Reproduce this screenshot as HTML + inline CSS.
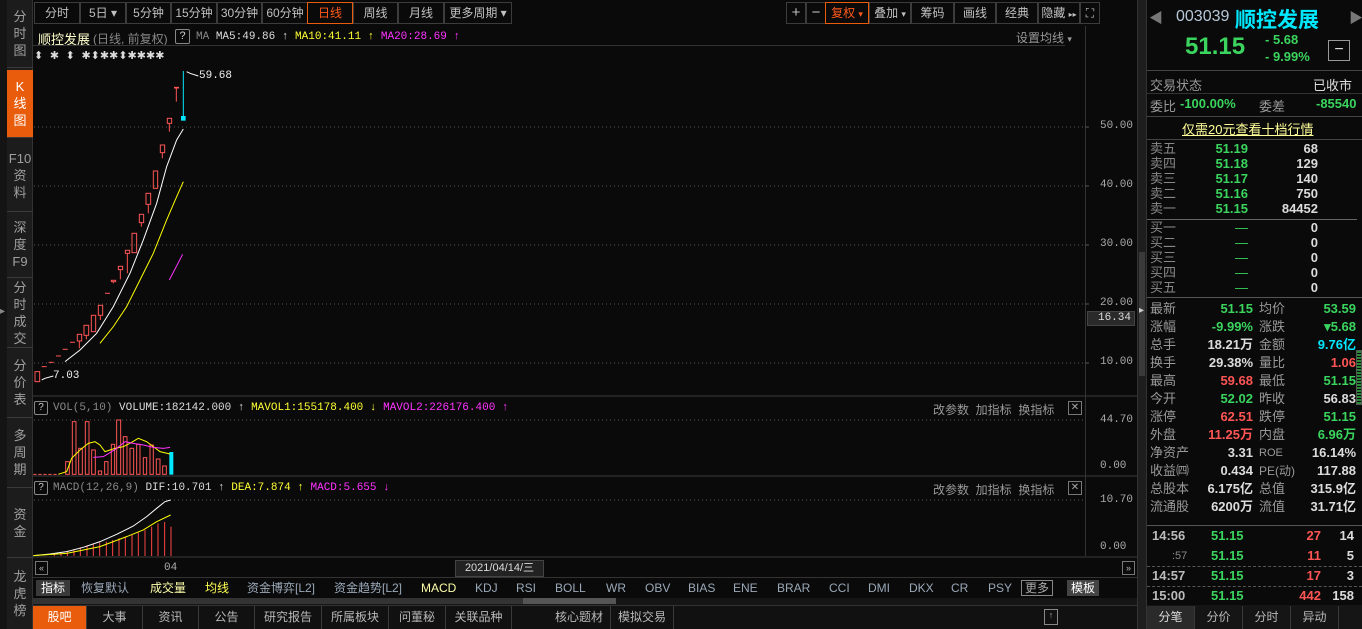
<!DOCTYPE html>
<html><head><meta charset="utf-8"><style>
*{margin:0;padding:0;box-sizing:border-box}
body{width:1362px;height:629px;background:#0a0a0a;overflow:hidden;position:relative;font-family:"Liberation Sans","Noto Sans CJK SC",sans-serif;font-size:12px;color:#c8c8c8}
.a{position:absolute;white-space:nowrap}
.mono{font-family:"Liberation Mono","Noto Sans CJK SC",monospace}
.side div{position:absolute;left:7px;width:26px;border-bottom:1px solid #3a3a3a;color:#a0a0a0;font-size:13px;line-height:17px;text-align:center;display:flex;align-items:center;justify-content:center;writing-mode:horizontal-tb}
.tb{position:absolute;top:2px;height:22px;border:1px solid #3c3c3c;color:#c0c0c0;font-size:12px;line-height:20px;text-align:center}
.g{color:#3ad45e}.r{color:#ff5555}.w{color:#dcdcdc}.y{color:#ffff33}.m{color:#ff33ff}.c{color:#00e8ff}
.row{position:absolute;left:1150px;width:208px;height:16px;font-size:13px;line-height:16px}
.row span{position:absolute}
.tab{position:absolute;top:606px;height:23px;line-height:23px;text-align:center;font-size:12px;color:#b8b8b8;border-right:1px solid #3a3a3a}
.it{position:absolute;top:579px;font-size:12px;line-height:18px;color:#9aa8b8}
</style></head><body>

<!-- left sidebar -->
<div class="a" style="left:0;top:0;width:7px;height:629px;background:#141414"></div>
<div class="a" style="left:7px;top:0;width:26px;height:629px;background:#1c1c1c;border-right:1px solid #333"></div>
<div class="side">
<div style="top:0;height:68px">分<br>时<br>图</div>
<div style="top:70px;height:68px;background:#e85c0c;color:#fff">K<br>线<br>图</div>
<div style="top:140px;height:72px">F10<br>资<br>料</div>
<div style="top:212px;height:66px">深<br>度<br>F9</div>
<div style="top:278px;height:70px">分<br>时<br>成<br>交</div>
<div style="top:348px;height:70px">分<br>价<br>表</div>
<div style="top:418px;height:70px">多<br>周<br>期</div>
<div style="top:488px;height:70px">资<br>金</div>
<div style="top:558px;height:71px;border:none">龙<br>虎<br>榜</div>
</div>
<div class="a" style="left:0;top:300px;width:7px;height:24px;color:#888;font-size:10px;line-height:24px">▸</div>

<!-- toolbar -->
<div class="tb" style="left:34px;width:46px">分时</div>
<div class="tb" style="left:80px;width:46px">5日 ▾</div>
<div class="tb" style="left:126px;width:45px">5分钟</div>
<div class="tb" style="left:171px;width:46px">15分钟</div>
<div class="tb" style="left:217px;width:45px">30分钟</div>
<div class="tb" style="left:262px;width:46px">60分钟</div>
<div class="tb" style="left:307px;width:46px;border-color:#e85c0c;color:#ff5a1a">日线</div>
<div class="tb" style="left:353px;width:45px">周线</div>
<div class="tb" style="left:398px;width:46px">月线</div>
<div class="tb" style="left:444px;width:68px">更多周期 ▾</div>

<div class="tb" style="left:786px;width:20px;font-size:15px">+</div>
<div class="tb" style="left:806px;width:20px;font-size:15px">−</div>
<div class="tb" style="left:825px;width:44px;border-color:#e85c0c;color:#ff5a1a">复权 <span style="font-size:9px">▾</span></div>
<div class="tb" style="left:869px;width:42px">叠加 <span style="font-size:9px">▾</span></div>
<div class="tb" style="left:911px;width:43px">筹码</div>
<div class="tb" style="left:954px;width:42px">画线</div>
<div class="tb" style="left:996px;width:42px">经典</div>
<div class="tb" style="left:1038px;width:42px">隐藏 <span style="font-size:8px">▸▸</span></div>
<div class="tb" style="left:1080px;width:20px;font-size:12px">⛶</div>

<!-- vertical borders of chart area -->
<div class="a" style="left:1085px;top:26px;width:1px;height:530px;background:#333"></div>
<div class="a" style="left:1137px;top:0;width:10px;height:629px;background:#1e1e1e;border-left:1px solid #333;border-right:1px solid #333"></div>
<div class="a" style="left:1139px;top:252px;width:6px;height:124px;background:#3a3a3a"></div>
<div class="a" style="left:1139px;top:302px;width:6px;height:18px;color:#ccc;font-size:10px;line-height:18px">▸</div>

<!-- title -->
<div class="a" style="left:38px;top:29px;font-size:13px;color:#ffffcc">顺控发展</div>
<div class="a" style="left:93px;top:30px;color:#888">(日线, 前复权)</div>
<div class="a" style="left:175px;top:29px;width:15px;height:15px;border:1px solid #888;border-radius:2px;color:#ccc;font-size:11px;text-align:center;line-height:13px">?</div>
<div class="a mono" style="left:196px;top:31px;font-size:11px"><span style="color:#888">MA</span> <span class="w">MA5:49.86 ↑</span> <span class="y">MA10:41.11 ↑</span> <span class="m">MA20:28.69 ↑</span></div>
<div class="a" style="left:1016px;top:29px;color:#999">设置均线 <span style="font-size:9px">▾</span></div>
<div class="a" style="left:33px;top:45px;width:1032px;height:1px;background:#333"></div>
<div class="a mono" style="left:34px;top:49px;font-size:11px;color:#ddd;letter-spacing:0px">⬍  ✱  ⬍  ✱⬍✱✱⬍✱✱✱✱</div>

<!-- main chart svg -->
<svg class="a" style="left:0;top:0" width="1137" height="560">
<g stroke="#555" stroke-dasharray="1 3">
<line x1="34" y1="127" x2="1085" y2="127"/><line x1="34" y1="186" x2="1085" y2="186"/><line x1="34" y1="245" x2="1085" y2="245"/><line x1="34" y1="304" x2="1085" y2="304"/><line x1="34" y1="363" x2="1085" y2="363"/>
<line x1="34" y1="420" x2="1085" y2="420"/><line x1="34" y1="500" x2="1085" y2="500"/>
</g>
<g stroke="#555"><line x1="1085" y1="127" x2="1089" y2="127"/><line x1="1085" y1="186" x2="1089" y2="186"/><line x1="1085" y1="245" x2="1089" y2="245"/><line x1="1085" y1="304" x2="1089" y2="304"/><line x1="1085" y1="363" x2="1089" y2="363"/></g>
<line x1="33" y1="396" x2="1137" y2="396" stroke="#3a3a3a"/>
<line x1="33" y1="476" x2="1137" y2="476" stroke="#3a3a3a"/>
<line x1="33" y1="557" x2="1137" y2="557" stroke="#3a3a3a"/>
<g transform="translate(30,60) scale(0.3333)" fill="none" stroke-width="3">
<g stroke="#ff5555">
<rect x="15" y="935" width="14" height="30"/>
<line x1="35" y1="920" x2="50" y2="920"/><line x1="56" y1="907" x2="71" y2="907"/><line x1="78" y1="888" x2="93" y2="888"/><line x1="98" y1="868" x2="113" y2="868"/><line x1="120" y1="847" x2="135" y2="847"/>
<rect x="142" y="823" width="13" height="20"/><line x1="148" y1="843" x2="148" y2="865"/>
<rect x="162" y="796" width="14" height="30"/><line x1="169" y1="826" x2="169" y2="838"/>
<rect x="184" y="766" width="13" height="49"/>
<rect x="205" y="736" width="13" height="30"/><line x1="211" y1="766" x2="211" y2="780"/>
<line x1="225" y1="700" x2="240" y2="700"/>
<rect x="244" y="661" width="13" height="4"/><line x1="250" y1="665" x2="250" y2="670"/>
<rect x="265" y="619" width="13" height="10"/><line x1="271" y1="629" x2="271" y2="658"/>
<rect x="286" y="571" width="13" height="9"/><line x1="292" y1="580" x2="292" y2="640"/>
<rect x="306" y="520" width="14" height="58"/>
<rect x="328" y="463" width="13" height="25"/><line x1="334" y1="488" x2="334" y2="500"/>
<rect x="348" y="400" width="14" height="33"/><line x1="355" y1="433" x2="355" y2="460"/>
<rect x="370" y="333" width="13" height="52"/>
<rect x="391" y="255" width="13" height="23"/><line x1="397" y1="278" x2="397" y2="295"/>
<rect x="412" y="175" width="13" height="15"/><line x1="418" y1="190" x2="418" y2="215"/>
<line x1="432" y1="83" x2="447" y2="83" stroke-width="5"/><line x1="439" y1="83" x2="439" y2="125"/>
</g>
<line x1="460" y1="33" x2="460" y2="170" stroke="#00e8ff"/>
<rect x="453" y="168" width="14" height="14" fill="#00e8ff" stroke="none"/>
<polyline stroke="#fff" points="105,905 150,870 200,820 250,740 300,640 340,540 380,430 410,320 440,240 460,207"/>
<polyline stroke="#ffff00" points="210,850 250,800 290,740 330,660 370,580 410,480 440,410 460,365"/>
<line x1="418" y1="660" x2="458" y2="583" stroke="#ff33ff"/>
<polyline stroke="#fff" points="470,35 480,40 505,48"/>
<polyline stroke="#fff" points="35,960 45,955 70,948"/>
</g>
<!-- volume -->
<g transform="translate(0,390) scale(0.3333)" fill="none" stroke-width="3">
<line x1="100" y1="253" x2="175" y2="253" stroke="#ff5555" stroke-dasharray="10 5"/>
<g stroke="#ff5555">
<rect x="197" y="215" width="11" height="38"/><rect x="217" y="95" width="11" height="158"/><rect x="236" y="175" width="11" height="78"/><rect x="256" y="95" width="11" height="158"/><rect x="275" y="180" width="11" height="73"/><rect x="295" y="243" width="10" height="10"/><rect x="314" y="215" width="10" height="38"/><rect x="334" y="163" width="10" height="90"/><rect x="350" y="90" width="12" height="163"/><rect x="370" y="140" width="11" height="113"/><rect x="390" y="175" width="11" height="78"/><rect x="410" y="163" width="10" height="90"/><rect x="430" y="203" width="10" height="50"/><rect x="450" y="165" width="10" height="88"/><rect x="469" y="207" width="11" height="46"/><rect x="488" y="228" width="11" height="25"/>
</g>
<rect x="508" y="186" width="12" height="68" fill="#00e8ff" stroke="none"/>
<polyline stroke="#ffff00" points="175,253 200,245 215,205 240,180 265,160 285,155 300,165 315,185 330,180 345,175 370,170 390,160 415,145 440,155 460,170 480,185 510,192"/>
<polyline stroke="#ff33ff" points="280,202 310,200 330,188 350,175 375,155 400,160 430,165 460,172 490,175 510,172"/>
<!-- macd -->
<g stroke="#ff4444"><line x1="163" y1="498" x2="163" y2="492"/><line x1="183" y1="498" x2="183" y2="490"/><line x1="202" y1="498" x2="202" y2="485"/><line x1="222" y1="498" x2="222" y2="478"/><line x1="241" y1="498" x2="241" y2="472"/><line x1="261" y1="498" x2="261" y2="466"/><line x1="280" y1="498" x2="280" y2="462"/><line x1="299" y1="498" x2="299" y2="458"/><line x1="319" y1="498" x2="319" y2="455"/><line x1="338" y1="498" x2="338" y2="450"/><line x1="357" y1="498" x2="357" y2="445"/><line x1="376" y1="498" x2="376" y2="440"/><line x1="396" y1="498" x2="396" y2="435"/><line x1="415" y1="498" x2="415" y2="428"/><line x1="435" y1="498" x2="435" y2="420"/><line x1="455" y1="498" x2="455" y2="410"/><line x1="474" y1="498" x2="474" y2="400"/><line x1="494" y1="498" x2="494" y2="396"/><line x1="513" y1="498" x2="513" y2="410"/></g>
<polyline stroke="#fff" points="100,497 150,492 200,485 250,472 300,455 350,433 400,408 440,380 470,355 495,335 512,330"/>
<polyline stroke="#ffff00" points="100,497 200,490 300,470 380,440 430,420 470,395 512,375"/>
</g>
</svg>

<!-- price labels -->
<div class="a mono" style="left:1100px;top:120px;font-size:11px;color:#aaa">50.00</div>
<div class="a mono" style="left:1100px;top:179px;font-size:11px;color:#aaa">40.00</div>
<div class="a mono" style="left:1100px;top:238px;font-size:11px;color:#aaa">30.00</div>
<div class="a mono" style="left:1100px;top:297px;font-size:11px;color:#aaa">20.00</div>
<div class="a mono" style="left:1087px;top:311px;width:48px;height:15px;background:#2a2a2a;border:1px solid #444;font-size:11px;color:#ddd;text-align:right;padding-right:3px;line-height:13px">16.34</div>
<div class="a mono" style="left:1100px;top:356px;font-size:11px;color:#aaa">10.00</div>
<div class="a mono" style="left:199px;top:70px;font-size:11px;color:#eee">59.68</div>
<div class="a mono" style="left:53px;top:370px;font-size:11px;color:#eee">7.03</div>

<!-- vol header -->
<div class="a" style="left:34px;top:401px;width:14px;height:14px;border:1px solid #888;border-radius:2px;color:#ccc;font-size:10px;text-align:center;line-height:12px">?</div>
<div class="a mono" style="left:53px;top:402px;font-size:11px"><span style="color:#888">VOL(5,10)</span> <span class="w">VOLUME:182142.000 ↑</span> <span class="y">MAVOL1:155178.400 ↓</span> <span class="m">MAVOL2:226176.400 ↑</span></div>
<div class="a" style="left:933px;top:401px;color:#999">改参数 &nbsp;加指标 &nbsp;换指标</div>
<div class="a" style="left:1068px;top:401px;width:14px;height:14px;border:1px solid #777;color:#aaa;font-size:10px;text-align:center;line-height:12px">✕</div>
<div class="a mono" style="left:1100px;top:414px;font-size:11px;color:#aaa">44.70</div>
<div class="a mono" style="left:1100px;top:460px;font-size:11px;color:#aaa">0.00</div>

<!-- macd header -->
<div class="a" style="left:34px;top:481px;width:14px;height:14px;border:1px solid #888;border-radius:2px;color:#ccc;font-size:10px;text-align:center;line-height:12px">?</div>
<div class="a mono" style="left:53px;top:482px;font-size:11px"><span style="color:#888">MACD(12,26,9)</span> <span class="w">DIF:10.701 ↑</span> <span class="y">DEA:7.874 ↑</span> <span class="m">MACD:5.655 ↓</span></div>
<div class="a" style="left:933px;top:481px;color:#999">改参数 &nbsp;加指标 &nbsp;换指标</div>
<div class="a" style="left:1068px;top:481px;width:14px;height:14px;border:1px solid #777;color:#aaa;font-size:10px;text-align:center;line-height:12px">✕</div>
<div class="a mono" style="left:1100px;top:494px;font-size:11px;color:#aaa">10.70</div>
<div class="a mono" style="left:1100px;top:541px;font-size:11px;color:#aaa">0.00</div>

<!-- date axis -->
<div class="a" style="left:35px;top:561px;width:13px;height:14px;border:1px solid #777;color:#bbb;font-size:9px;text-align:center;line-height:12px">«</div>
<div class="a mono" style="left:164px;top:562px;font-size:11px;color:#aaa">04</div>
<div class="a" style="left:455px;top:560px;width:89px;height:17px;background:#222;border:1px solid #444;color:#ddd;font-size:11px;text-align:center;line-height:15px">2021/04/14/三</div>
<div class="a" style="left:1122px;top:561px;width:13px;height:14px;border:1px solid #777;color:#bbb;font-size:9px;text-align:center;line-height:12px">»</div>
<div class="a" style="left:33px;top:577px;width:1104px;height:1px;background:#333"></div>

<!-- indicator tabs -->
<div class="a" style="left:36px;top:580px;width:34px;height:16px;background:#3a3a3a;color:#fff;font-size:12px;text-align:center;line-height:16px">指标</div>
<div class="it" style="left:81px">恢复默认</div>
<div class="it" style="left:150px;color:#ffffaa">成交量</div>
<div class="it" style="left:205px;color:#ffff55">均线</div>
<div class="it" style="left:247px">资金博弈[L2]</div>
<div class="it" style="left:334px">资金趋势[L2]</div>
<div class="it" style="left:421px;color:#ffffaa">MACD</div>
<div class="it" style="left:475px">KDJ</div>
<div class="it" style="left:516px">RSI</div>
<div class="it" style="left:555px">BOLL</div>
<div class="it" style="left:606px">WR</div>
<div class="it" style="left:645px">OBV</div>
<div class="it" style="left:688px">BIAS</div>
<div class="it" style="left:733px">ENE</div>
<div class="it" style="left:777px">BRAR</div>
<div class="it" style="left:829px">CCI</div>
<div class="it" style="left:868px">DMI</div>
<div class="it" style="left:909px">DKX</div>
<div class="it" style="left:951px">CR</div>
<div class="it" style="left:988px">PSY</div>
<div class="a" style="left:1021px;top:580px;width:32px;height:16px;border:1px solid #888;color:#aaa;font-size:12px;text-align:center;line-height:14px">更多</div>
<div class="a" style="left:1067px;top:580px;width:32px;height:16px;background:#444;color:#fff;font-size:12px;text-align:center;line-height:16px">模板</div>
<div class="a" style="left:33px;top:598px;width:1104px;height:7px;background:#151515"></div>
<div class="a" style="left:33px;top:598px;width:490px;height:6px;background:#333"></div>
<div class="a" style="left:523px;top:598px;width:93px;height:6px;background:#555"></div>

<!-- bottom tabs -->
<div class="a" style="left:33px;top:605px;width:1104px;height:24px;background:#111;border-top:1px solid #333"></div>
<div class="tab" style="left:33px;width:54px;background:#e85c0c;color:#fff">股吧</div>
<div class="tab" style="left:87px;width:56px">大事</div>
<div class="tab" style="left:143px;width:56px">资讯</div>
<div class="tab" style="left:199px;width:56px">公告</div>
<div class="tab" style="left:255px;width:67px">研究报告</div>
<div class="tab" style="left:322px;width:67px">所属板块</div>
<div class="tab" style="left:389px;width:57px">问董秘</div>
<div class="tab" style="left:446px;width:66px">关联品种</div>
<div class="tab" style="left:548px;width:63px">核心题材</div>
<div class="tab" style="left:611px;width:63px">模拟交易</div>
<div class="a" style="left:1044px;top:609px;width:14px;height:16px;border:1px solid #888;color:#aaa;font-size:9px;text-align:center">↑</div>

<!-- right panel -->
<div class="a" style="left:1149px;top:8px;color:#777;font-size:14px">◀</div>
<div class="a" style="left:1176px;top:8px;font-size:16px;color:#b8c8d8">003039</div>
<div class="a" style="left:1235px;top:4px;font-size:21px;font-weight:bold;color:#00e8ff">顺控发展</div>
<div class="a" style="left:1349px;top:8px;color:#777;font-size:14px">▶</div>
<div class="a" style="left:1185px;top:33px;font-size:24px;font-weight:bold" ><span class="g">51.15</span></div>
<div class="a g" style="left:1265px;top:32px;font-size:13px;font-weight:bold">- 5.68</div>
<div class="a g" style="left:1265px;top:49px;font-size:13px;font-weight:bold">- 9.99%</div>
<div class="a" style="left:1328px;top:40px;width:22px;height:21px;border:1px solid #999;color:#ddd;font-size:16px;text-align:center;line-height:18px">−</div>
<div class="a" style="left:1147px;top:70px;width:215px;height:1px;background:#444"></div>
<div class="a" style="left:1150px;top:75px;font-size:13px;color:#999">交易状态</div>
<div class="a" style="left:1313px;top:75px;font-size:13px;color:#ddd">已收市</div>
<div class="a" style="left:1147px;top:93px;width:215px;height:1px;background:#333"></div>
<div class="a" style="left:1150px;top:96px;font-size:13px;color:#999">委比</div>
<div class="a g" style="left:1180px;top:96px;font-size:13px;font-weight:bold">-100.00%</div>
<div class="a" style="left:1259px;top:96px;font-size:13px;color:#999">委差</div>
<div class="a g" style="left:1316px;top:96px;font-size:13px;font-weight:bold">-85540</div>
<div class="a" style="left:1147px;top:116px;width:215px;height:1px;background:#444"></div>
<div class="a" style="left:1182px;top:119px;font-size:13px;color:#ffff99;text-decoration:underline">仅需20元查看十档行情</div>
<div class="a" style="left:1147px;top:139px;width:215px;height:1px;background:#444"></div>

<div id="ob"></div>
<div class="a" style="left:1147px;top:219px;width:210px;height:1px;background:#666"></div>
<div class="a" style="left:1147px;top:297px;width:215px;height:1px;background:#555"></div>
<div class="a" style="left:1147px;top:525px;width:215px;height:1px;background:#555"></div>
<div class="a" style="left:1147px;top:605px;width:215px;height:24px;background:#151515"></div>
<div class="tab" style="left:1147px;width:48px;background:#2a2a2a;color:#ddd">分笔</div>
<div class="tab" style="left:1195px;width:48px">分价</div>
<div class="tab" style="left:1243px;width:48px">分时</div>
<div class="tab" style="left:1291px;width:48px">异动</div>

<div style="font-size:13px">
<!-- sell -->
<div class="row" style="top:141px;line-height:15px;color:#888"><span style="left:0">卖五</span><span class="g" style="right:110px;font-weight:bold">51.19</span><span class="w" style="right:40px;font-weight:bold">68</span></div>
<div class="row" style="top:156px;line-height:15px;color:#888"><span style="left:0">卖四</span><span class="g" style="right:110px;font-weight:bold">51.18</span><span class="w" style="right:40px;font-weight:bold">129</span></div>
<div class="row" style="top:171px;line-height:15px;color:#888"><span style="left:0">卖三</span><span class="g" style="right:110px;font-weight:bold">51.17</span><span class="w" style="right:40px;font-weight:bold">140</span></div>
<div class="row" style="top:186px;line-height:15px;color:#888"><span style="left:0">卖二</span><span class="g" style="right:110px;font-weight:bold">51.16</span><span class="w" style="right:40px;font-weight:bold">750</span></div>
<div class="row" style="top:201px;line-height:15px;color:#888"><span style="left:0">卖一</span><span class="g" style="right:110px;font-weight:bold">51.15</span><span class="w" style="right:40px;font-weight:bold">84452</span></div>
<div class="row" style="top:220px;line-height:15px;color:#888"><span style="left:0">买一</span><span class="g" style="right:110px">—</span><span class="w" style="right:40px;font-weight:bold">0</span></div>
<div class="row" style="top:235px;line-height:15px;color:#888"><span style="left:0">买二</span><span class="g" style="right:110px">—</span><span class="w" style="right:40px;font-weight:bold">0</span></div>
<div class="row" style="top:250px;line-height:15px;color:#888"><span style="left:0">买三</span><span class="g" style="right:110px">—</span><span class="w" style="right:40px;font-weight:bold">0</span></div>
<div class="row" style="top:265px;line-height:15px;color:#888"><span style="left:0">买四</span><span class="g" style="right:110px">—</span><span class="w" style="right:40px;font-weight:bold">0</span></div>
<div class="row" style="top:280px;line-height:15px;color:#888"><span style="left:0">买五</span><span class="g" style="right:110px">—</span><span class="w" style="right:40px;font-weight:bold">0</span></div>
</div>

<!-- stats -->
<div style="font-weight:bold">
<div class="row" style="top:301px;color:#999"><span style="left:0;font-weight:normal">最新</span><span class="g" style="right:105px">51.15</span><span style="left:109px;font-weight:normal">均价</span><span class="g" style="right:2px">53.59</span></div>
<div class="row" style="top:319px;color:#999"><span style="left:0;font-weight:normal">涨幅</span><span class="g" style="right:105px">-9.99%</span><span style="left:109px;font-weight:normal">涨跌</span><span class="g" style="right:2px">▾5.68</span></div>
<div class="row" style="top:337px;color:#999"><span style="left:0;font-weight:normal">总手</span><span class="w" style="right:105px">18.21万</span><span style="left:109px;font-weight:normal">金额</span><span class="c" style="right:2px">9.76亿</span></div>
<div class="row" style="top:355px;color:#999"><span style="left:0;font-weight:normal">换手</span><span class="w" style="right:105px">29.38%</span><span style="left:109px;font-weight:normal">量比</span><span class="r" style="right:2px">1.06</span></div>
<div class="row" style="top:373px;color:#999"><span style="left:0;font-weight:normal">最高</span><span class="r" style="right:105px">59.68</span><span style="left:109px;font-weight:normal">最低</span><span class="g" style="right:2px">51.15</span></div>
<div class="row" style="top:391px;color:#999"><span style="left:0;font-weight:normal">今开</span><span class="g" style="right:105px">52.02</span><span style="left:109px;font-weight:normal">昨收</span><span class="w" style="right:2px">56.83</span></div>
<div class="row" style="top:409px;color:#999"><span style="left:0;font-weight:normal">涨停</span><span class="r" style="right:105px">62.51</span><span style="left:109px;font-weight:normal">跌停</span><span class="g" style="right:2px">51.15</span></div>
<div class="row" style="top:427px;color:#999"><span style="left:0;font-weight:normal">外盘</span><span class="r" style="right:105px">11.25万</span><span style="left:109px;font-weight:normal">内盘</span><span class="g" style="right:2px">6.96万</span></div>
<div class="row" style="top:445px;color:#999"><span style="left:0;font-weight:normal">净资产</span><span class="w" style="right:105px">3.31</span><span style="left:109px;font-weight:normal;font-size:11px">ROE</span><span class="w" style="right:2px">16.14%</span></div>
<div class="row" style="top:463px;color:#999"><span style="left:0;font-weight:normal">收益㈣</span><span class="w" style="right:105px">0.434</span><span style="left:109px;font-weight:normal;font-size:12px">PE(动)</span><span class="w" style="right:2px">117.88</span></div>
<div class="row" style="top:481px;color:#999"><span style="left:0;font-weight:normal">总股本</span><span class="w" style="right:105px">6.175亿</span><span style="left:109px;font-weight:normal">总值</span><span class="w" style="right:2px">315.9亿</span></div>
<div class="row" style="top:499px;color:#999"><span style="left:0;font-weight:normal">流通股</span><span class="w" style="right:105px">6200万</span><span style="left:109px;font-weight:normal">流值</span><span class="w" style="right:2px">31.71亿</span></div>

<div class="row" style="top:528px;color:#bbb"><span style="left:2px">14:56</span><span class="g" style="left:61px">51.15</span><span class="r" style="right:37px">27</span><span class="w" style="right:4px">14</span></div>
<div class="row" style="top:548px;color:#888"><span style="left:22px;font-weight:normal;font-size:11px">:57</span><span class="g" style="left:61px">51.15</span><span class="r" style="right:37px">11</span><span class="w" style="right:4px">5</span></div>
<div class="a" style="left:1147px;top:566px;width:215px;height:1px;border-top:1px dashed #555"></div>
<div class="row" style="top:568px;color:#bbb"><span style="left:2px">14:57</span><span class="g" style="left:61px">51.15</span><span class="r" style="right:37px">17</span><span class="w" style="right:4px">3</span></div>
<div class="a" style="left:1147px;top:586px;width:215px;height:1px;border-top:1px dashed #555"></div>
<div class="row" style="top:588px;color:#bbb"><span style="left:2px">15:00</span><span class="g" style="left:61px">51.15</span><span class="r" style="right:37px">442</span><span class="w" style="right:4px">158</span></div>
</div>
<div class="a" style="left:1356px;top:350px;width:6px;height:55px;background:repeating-linear-gradient(#2a8a3a 0 2px,#0a0a0a 2px 3px);border:1px solid #555"></div>
</body></html>
